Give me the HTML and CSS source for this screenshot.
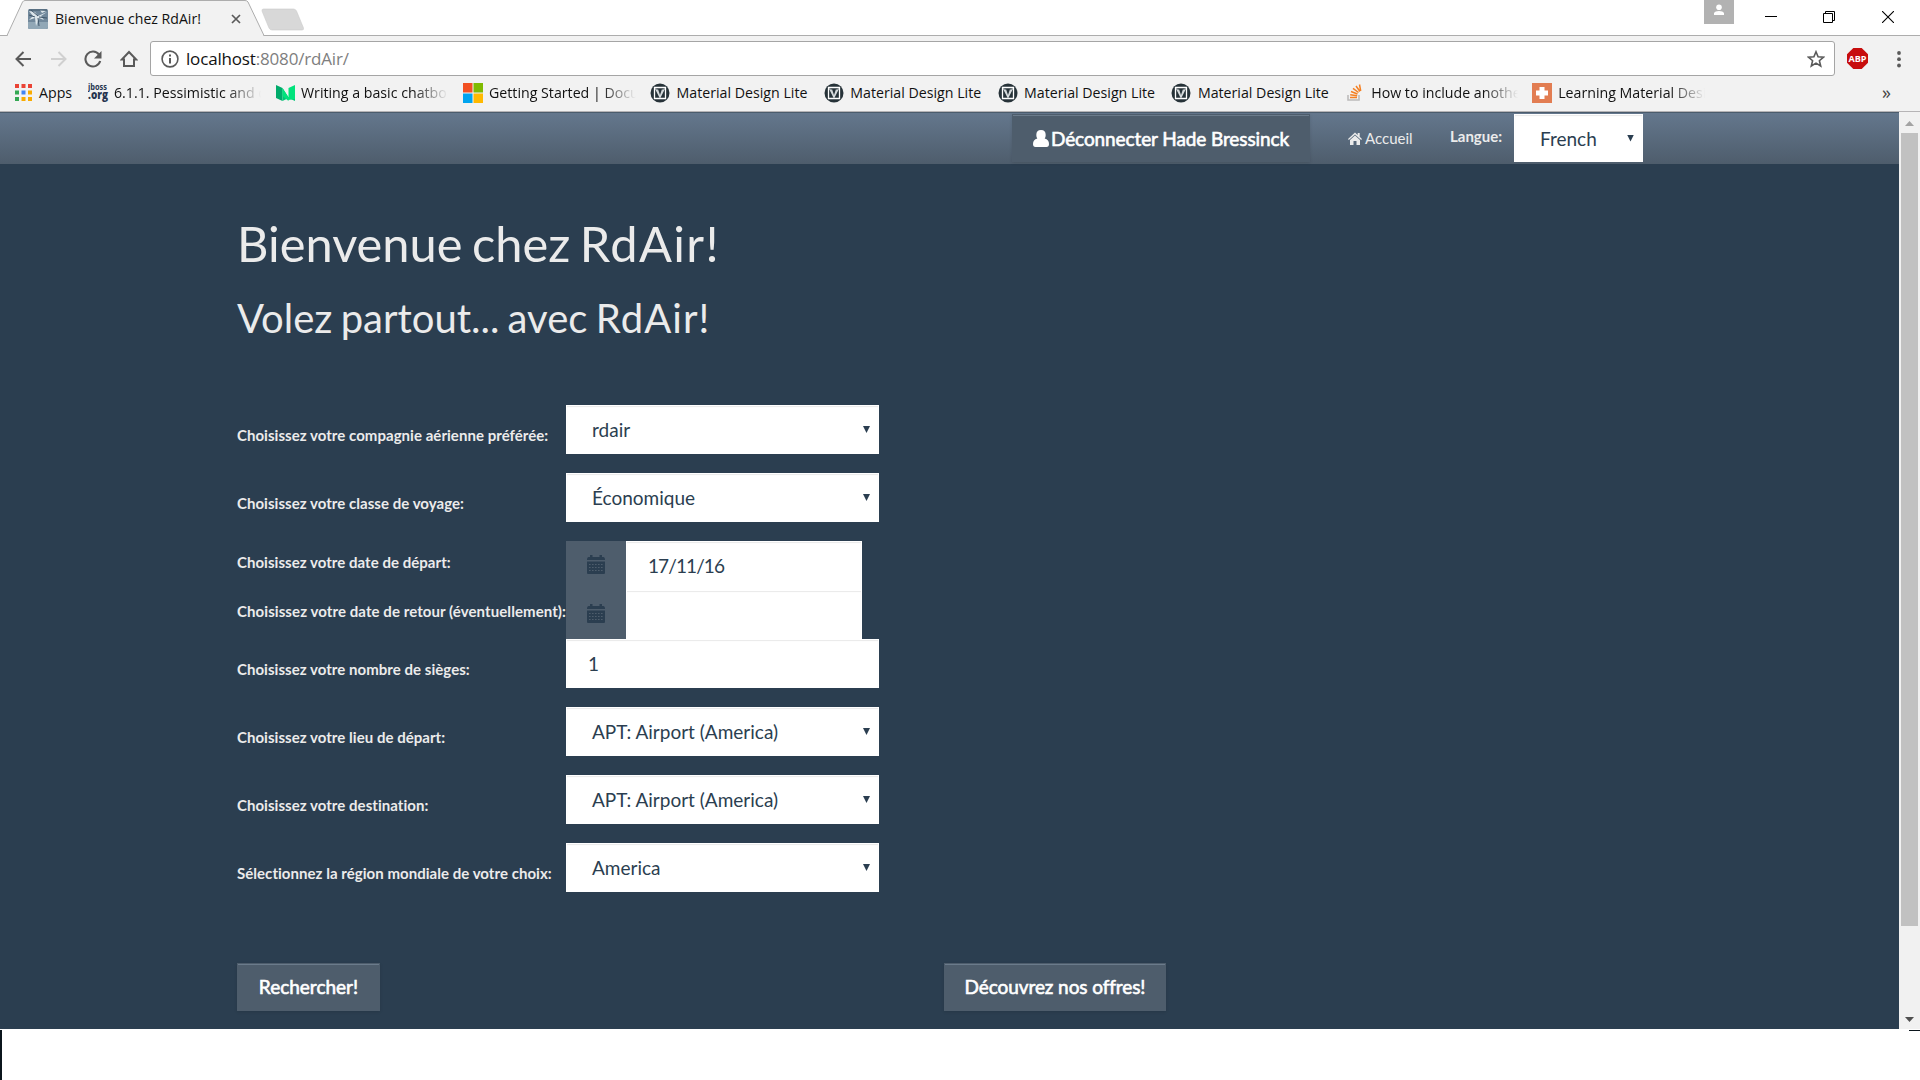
FILE: index.html
```
<!DOCTYPE html>
<html lang="fr">
<head>
<meta charset="utf-8">
<title>Bienvenue chez RdAir!</title>
<link rel="stylesheet" href="styles.css">
</head>
<body>
<svg class="defs" width="0" height="0">
  <symbol id="mdl" viewBox="0 0 20 20"><circle cx="10" cy="10" r="9.500" fill="#263238"/><path d="M4.500 4.500h11v11h-11z" fill="none" stroke="#fff" stroke-width="1.300"/><path d="M5.500 5.500l4.500 9 4.500-9M10 14l-2.500-7.500M10 14l2.500-7.500" fill="none" stroke="#d5dadc" stroke-width="1.200"/></symbol>
  <symbol id="calendar" viewBox="0 0 18 19"><path d="M0 4.500Q0 2 1.500 2H3V0h2.500v2h7V0H15v2h1.500Q18 2 18 4.500V5H0zM0 6.500h18V18q0 1-1 1H1q-1 0-1-1z" fill="#2b3e50"/><path d="M2 9.500h14M2 12.500h14M2 15.500h14" stroke="#4e5d6c" stroke-width="1" stroke-dasharray="1.600 1.400"/></symbol>
</svg>

<div class="window">
  <header class="tabstrip">
    <svg class="tabshape" width="310" height="36" viewBox="0 0 310 36"><path d="M0 35.500H7L22.500 2Q23.500.5 25 .5H245Q247 .5 248 2L264 35.500" fill="#f2f2f2" stroke="#adadad"/><path d="M8 35h255v1H8z" fill="#f2f2f2"/><path d="M263.500 9h30q2 0 3 2l7 17q.5 2-1.500 2h-30q-2 0-3-2l-7-17q-.5-2 1.500-2z" fill="#d8d8d8" stroke="#cbcbcb" stroke-width=".6"/></svg>
    <div class="tab">
      <svg width="20" height="20" viewBox="0 0 20 20"><rect width="20" height="20" rx="1.500" fill="#71889b"/><path d="M0 13h20v5q0 2-2 2H2q-2 0-2-2z" fill="#91a7b6"/><path d="M1 2l6 1 3 4 9-4-6 4 3 4-5-2-3 8-1-8-6 2 4-4zM12 1l2 3 4-2" fill="#dce5ea"/><path d="M1 6l6 2M11 8l8 1M10 9l1 8M3 1l7 6M1 1h18" stroke="#42586b" fill="none"/></svg>
      <span class="tab-title">Bienvenue chez RdAir!</span>
      <svg width="10" height="10" viewBox="0 0 10 10"><path d="M1 1l8 8M9 1L1 9" stroke="#5a5a5a" stroke-width="1.700"/></svg>
    </div>
    <div class="controls">
      <svg class="profile" width="30" height="24" viewBox="0 0 30 24"><path fill="#b2b2b2" d="M0 0h30v24H0z"/><circle cx="15" cy="7.300" r="2.800" fill="#fff"/><path d="M10 15v-2q1-2 5-2t5 2v2z" fill="#fff"/></svg>
      <svg class="minimize" width="12" height="12" viewBox="0 0 12 12"><path d="M0 5.500h12" stroke="#000"/></svg>
      <svg class="restore" width="12" height="12" viewBox="0 0 12 12"><path d="M.5 2.500h9v9h-9zM2.500 2V.5h9v9H10" fill="none" stroke="#000"/></svg>
      <svg width="12" height="12" viewBox="0 0 12 12"><path d="M0 0l12 12M12 0L0 12" stroke="#000" stroke-width="1.100"/></svg>
    </div>
  </header>

  <div class="toolbar">
    <div class="nav-icons">
      <svg width="17" height="16" viewBox="0 0 17 16"><path d="M16 8H1.500M8.500 1L1.500 8l7 7" fill="none" stroke="#5a5a5a" stroke-width="2"/></svg>
      <svg width="17" height="16" viewBox="0 0 17 16"><path d="M1 8h14.500M8.500 1l7 7-7 7" fill="none" stroke="#d0d0d0" stroke-width="2"/></svg>
      <svg width="18" height="18" viewBox="0 0 18 18"><path d="M15 4.500A7.500 7.500 0 1 0 16.200 11" fill="none" stroke="#5a5a5a" stroke-width="2.100"/><path d="M17.500 1v7.500H10z" fill="#5a5a5a"/></svg>
      <svg width="18" height="18" viewBox="0 0 18 18"><path d="M9 2L1.800 9.500H4V16h10V9.500h2.200z" fill="none" stroke="#5a5a5a" stroke-width="2"/></svg>
    </div>
    <div class="address">
      <svg width="18" height="18" viewBox="0 0 18 18"><circle cx="9" cy="9" r="7.900" fill="none" stroke="#5a5a5a" stroke-width="1.600"/><path d="M8 4.500h2v2H8zM8 8h2v5.500H8z" fill="#5a5a5a"/></svg>
      <span class="url">localhost<span class="path">:8080/rdAir/</span></span>
      <svg class="star" width="18" height="18" viewBox="0 0 18 18"><path d="M9 1.800l2.100 5 5.400.4-4.100 3.500 1.300 5.300L9 13.100 4.300 16l1.300-5.300-4.100-3.500 5.400-.4z" fill="none" stroke="#5a5a5a" stroke-width="1.600"/></svg>
    </div>
    <svg class="abp" width="21" height="21" viewBox="0 0 21 21"><path d="M6.300 0h8.400L21 6.300v8.400L14.700 21H6.300L0 14.700V6.300z" fill="#c70d0d"/><text x="10.500" y="14" text-anchor="middle" textLength="18" lengthAdjust="spacingAndGlyphs">ABP</text></svg>
    <svg class="more" width="6" height="18" viewBox="0 0 6 18"><circle cx="3" cy="3" r="1.900"/><circle cx="3" cy="9.200" r="1.900"/><circle cx="3" cy="15.500" r="1.900"/></svg>
  </div>

  <nav class="bookmarks">
    <div class="bm apps"><svg width="17" height="17" viewBox="0 0 17 17"><path d="M0 0h4v4H0zM6.500 0h4v4h-4zM13 0h4v4h-4z" fill="#ea4335"/><path d="M0 6.500h4v4H0zM0 13h4v4H0z" fill="#34a853"/><path d="M6.500 6.500h4v4h-4z" fill="#4285f4"/><path d="M13 6.500h4v4h-4zM6.500 13h4v4h-4zM13 13h4v4h-4z" fill="#f9ab00"/></svg><span>Apps</span></div>
    <div class="bm jboss"><svg width="21" height="20" viewBox="0 0 21 20" class="jb"><text x="0" y="7" textLength="19" lengthAdjust="spacingAndGlyphs">jboss</text><text class="org" x="0" y="16" textLength="20" lengthAdjust="spacingAndGlyphs">.org</text></svg><span class="fade">6.1.1. Pessimistic and o</span></div>
    <div class="bm writing"><svg width="19" height="16" viewBox="0 0 19 16"><path d="M0 0l6.500 3v13L0 13z" fill="#00ab6b"/><path d="M6.500 3L13 13l6-3v6l-6.500-3L6.500 16z" fill="#00c777"/><path d="M6.500 3l6 9.500v3.500L6.500 11zM12.500 3L19 0v14l-6.500 1z" fill="#00e37c"/></svg><span class="fade">Writing a basic chatbo</span></div>
    <div class="bm"><svg width="20" height="20" viewBox="0 0 20 20"><path d="M0 0h9.500v9.500H0z" fill="#f25022"/><path d="M10.500 0H20v9.500h-9.500z" fill="#7fba00"/><path d="M0 10.500h9.500V20H0z" fill="#00a4ef"/><path d="M10.500 10.500H20V20h-9.500z" fill="#ffb900"/></svg><span class="fade">Getting Started | Docu</span></div>
    <div class="bm mdl"><svg width="20" height="20"><use href="#mdl"/></svg><span>Material Design Lite</span></div>
    <div class="bm mdl"><svg width="20" height="20"><use href="#mdl"/></svg><span>Material Design Lite</span></div>
    <div class="bm mdl"><svg width="20" height="20"><use href="#mdl"/></svg><span>Material Design Lite</span></div>
    <div class="bm mdl"><svg width="20" height="20"><use href="#mdl"/></svg><span>Material Design Lite</span></div>
    <div class="bm so"><svg width="15" height="17" viewBox="0 0 15 17"><path d="M1 11v5h11v-5" fill="none" stroke="#bcbbbb" stroke-width="1.600"/><path d="M3 13.500h7M3.200 10.700l7 1M4 7.500l6.500 2.500M6 4.300l5.500 4.200M9 2l4 5.500M12.500.5l1.200 6.500" stroke="#f48024" stroke-width="1.500"/></svg><span class="fade">How to include anothe</span></div>
    <div class="bm"><svg width="20" height="20" viewBox="0 0 20 20"><path fill="#e27d52" d="M0 0h20v20H0z"/><path d="M10 4v12M4 10h12" stroke="#fff" stroke-width="5"/></svg><span class="fade">Learning Material Desi</span></div>
    <span class="overflow">»</span>
  </nav>

  <div class="viewport">
    <div class="page">
      <nav class="navbar">
        <button class="btn logout"><svg width="16" height="17" viewBox="0 0 16 17"><path d="M8 0Q3.300 0 3.300 5q0 2 1 3.500Q0 9.500 0 14q0 3 2.500 3h11Q16 17 16 14q0-4.500-4.300-5.500 1-1.500 1-3.500Q12.700 0 8 0z" fill="#fff"/></svg><span>Déconnecter Hade Bressinck</span></button>
        <a class="home"><svg width="14" height="13" viewBox="0 0 14 13"><path d="M7 .5l2.700 2.400V1h2v3.800L14 7l-.8.900L7 2.500.8 7.900 0 7z" fill="#ebebeb"/><path d="M7 3.600l5 4.400v5H8.500V9h-3v4H2V8z" fill="#ebebeb"/></svg><span>Accueil</span></a>
        <span class="langue">Langue:</span>
        <div class="field lang"><span>French</span><i class="arrow"></i></div>
      </nav>
      <main class="content">
        <h1>Bienvenue chez <span class="brand">RdAir!</span></h1>
        <h2>Volez partout... avec <span class="brand">RdAir!</span></h2>
        <form class="form">
          <div class="row"><label>Choisissez votre compagnie aérienne préférée:</label><div class="field"><span>rdair</span><i class="arrow"></i></div></div>
          <div class="row"><label>Choisissez votre classe de voyage:</label><div class="field"><span>Économique</span><i class="arrow"></i></div></div>
          <div class="row date"><label>Choisissez votre date de départ:</label><div class="addon"><svg width="18" height="19"><use href="#calendar"/></svg></div><div class="field input"><span class="digits">17/11/16</span></div></div>
          <div class="row date"><label class="wide">Choisissez votre date de retour (éventuellement):</label><div class="addon"><svg width="18" height="19"><use href="#calendar"/></svg></div><div class="field input"></div></div>
          <div class="row"><label>Choisissez votre nombre de sièges:</label><div class="field input"><span>1</span></div></div>
          <div class="row"><label>Choisissez votre lieu de départ:</label><div class="field"><span>APT: Airport (America)</span><i class="arrow"></i></div></div>
          <div class="row"><label>Choisissez votre destination:</label><div class="field"><span>APT: Airport (America)</span><i class="arrow"></i></div></div>
          <div class="row"><label>Sélectionnez la région mondiale de votre choix:</label><div class="field"><span>America</span><i class="arrow"></i></div></div>
          <div class="actions"><button type="button" class="btn search"><span>Rechercher!</span></button><button type="button" class="btn offers"><span>Découvrez nos offres!</span></button></div>
        </form>
      </main>
    </div>
    <div class="scrollbar">
      <svg width="9" height="5" viewBox="0 0 9 5"><path d="M0 5L4.500 0 9 5z" fill="#a3a3a3"/></svg>
      <div class="thumb"></div>
      <svg width="9" height="5" viewBox="0 0 9 5"><path d="M0 0h9L4.500 5z" fill="#505050"/></svg>
    </div>
  </div>
  <footer class="below"><div class="edge"></div><div class="dash"></div></footer>
</div>
</body>
</html>
```
FILE: styles.css
```
* { box-sizing: border-box; }
body { margin: 0; background: #fff; overflow: hidden; }
svg { display: block; flex: none; }
.defs { position: absolute; }
.window { width: 1920px; height: 1080px; display: flex; flex-direction: column; font-family: "Open Sans", sans-serif; color: #111; }

.tabstrip { height: 36px; border-bottom: 1px solid #adadad; display: flex; justify-content: space-between; position: relative; flex: none; }
.tabshape { position: absolute; left: 0; top: 0; }
.tab { position: relative; display: flex; align-items: center; padding: 3px 0 0 28px; height: 35px; font-size: 14.100px; }
.tab-title { margin: -2px 0 0 7px; width: 176px; white-space: nowrap; }
.controls { display: flex; padding-right: 26px; }
.controls svg { margin: 11px 0 0 47px; }
.controls .profile { margin: 0 -16px 0 0; }
.controls .minimize { margin-left: 47px; }
.controls .restore { margin-left: 46px; }

.toolbar { height: 43px; background: #f2f2f2; display: flex; align-items: flex-start; padding: 5px 9px 0 15px; flex: none; }
.nav-icons { display: flex; width: 135px; gap: 17.500px; height: 35px; align-items: center; }
.address { width: 1685px; height: 35px; border: 1px solid #a5a5a5; border-radius: 3px; background: #fff; display: flex; align-items: center; padding: 0 9px 0 10px; }
.url { margin-left: 7px; font-size: 17px; letter-spacing: -.17px; flex: 1; }
.path { color: #7e7e7e; }
.abp { margin: 7px 0 0 12px; }
.abp text { font: bold 9.500px "Open Sans", sans-serif; fill: #fff; }
.more { margin: 9px 0 0 28px; fill: #5a5a5a; }

.bookmarks { height: 33px; background: #f2f2f2; border-bottom: 1px solid #b6b4b6; display: flex; padding: 0 10px 5px 15px; font-size: 14.200px; flex: none; }
.bm { width: 187px; display: flex; align-items: center; gap: 6px; white-space: nowrap; flex: none; }
.bm.apps { width: 73px; gap: 7px; }
.bm.writing { width: 187px; gap: 6px; }
.bm.jboss { width: 188px; gap: 5px; }
.bm.mdl { width: 173.800px; gap: 6.500px; }
.bm.so { width: 187px; gap: 9px; padding-left: 2px; }
.fade { width: 147px; overflow: hidden; -webkit-mask-image: linear-gradient(90deg, #000 112px, transparent 147px); mask-image: linear-gradient(90deg, #000 112px, transparent 147px); }
.jb text { font: bold 8px "Open Sans", sans-serif; fill: #26354f; }
.jb .org { font-size: 12px; font-weight: 800; }
.overflow { margin: 1px 19px 0 auto; font-size: 18px; line-height: 24px; color: #444; }

.viewport { height: 917px; display: flex; flex: none; }
.page { width: 1899px; background: #2b3e50; font-family: Lato, sans-serif; color: #ebebeb; }
.navbar { height: 52px; border-top: 1px solid #4b5c6c; background: linear-gradient(#64778d, #4e5d6c); padding: 1px 0 0 1012px; display: flex; align-items: flex-start; }
.btn { height: 48px; border: 1px solid #4e5d6c; background: #4e5d6c; box-shadow: inset 0 2px 0 -1px #6b7b8b, 0 1px 3px rgba(0,0,0,.12); color: #fff; font: 19px Lato, sans-serif; -webkit-text-stroke: .6px #fff; display: flex; align-items: center; justify-content: center; padding: 0; white-space: nowrap; }
.logout { width: 298px; gap: 2px; letter-spacing: -.1px; }
.home { margin: 15px 0 0 38px; display: flex; align-items: center; gap: 3px; font-size: 15px; line-height: 18px; width: 102px; }
.langue { font-weight: 700; font-size: 15px; line-height: 18px; margin-top: 13px; width: 64px; }
.field { width: 313px; height: 49px; background: #fff; color: #2b3e50; border: 1px solid #fff; box-shadow: inset 0 1px 1px rgba(0,0,0,.09); font-size: 19px; line-height: 26px; display: flex; align-items: center; justify-content: space-between; padding: 1px 8px 0 25px; }
.arrow { width: 7px; height: 7px; background: #2b3e50; clip-path: polygon(0 0, 100% 0, 50% 100%); margin-bottom: 1px; }
.lang { width: 129px; height: 48px; }

.content { padding: 0 237px; }
h1 { font-weight: 400; font-size: 48.750px; line-height: 60px; margin: 49px 0 0; word-spacing: -3px; }
h2 { font-weight: 400; font-size: 40px; line-height: 48px; margin: 21px 0 63px; word-spacing: -2px; }
h1 .brand { letter-spacing: 1.400px; }
h2 .brand { letter-spacing: 1.100px; }
.row { display: flex; height: 49px; margin-bottom: 19px; }
.row label { width: 329px; padding-top: 12px; font-weight: 700; font-size: 15px; letter-spacing: .04px; line-height: 37px; white-space: nowrap; }
.row.date { margin: 0; }
.row.date label { padding: 0; line-height: 43px; }
.row.date .wide { letter-spacing: .08px; }
.input { padding-left: 21px; }
.date .input { width: 236px; }
.digits { letter-spacing: -.900px; }
.addon { width: 60px; background: #4e5d6c; display: flex; align-items: center; justify-content: center; padding-bottom: 2px; }
.actions { display: flex; justify-content: space-between; width: 929px; margin-top: 71px; }
.actions .btn { padding-bottom: 1px; }
.search { width: 143px; }
.offers { width: 222px; letter-spacing: -.09px; }

.scrollbar { width: 21px; background: #f1f1f1; display: flex; flex-direction: column; align-items: center; padding: 9px 0 7px; }
.thumb { width: 17px; height: 793px; background: #c1c1c1; margin: 7px 0 auto; }
.below { flex: 1; display: flex; justify-content: space-between; padding-top: 1px; }
.edge { width: 2px; background: #0b151c; }
.dash { width: 11px; height: 1px; background: #0b151c; }
```
